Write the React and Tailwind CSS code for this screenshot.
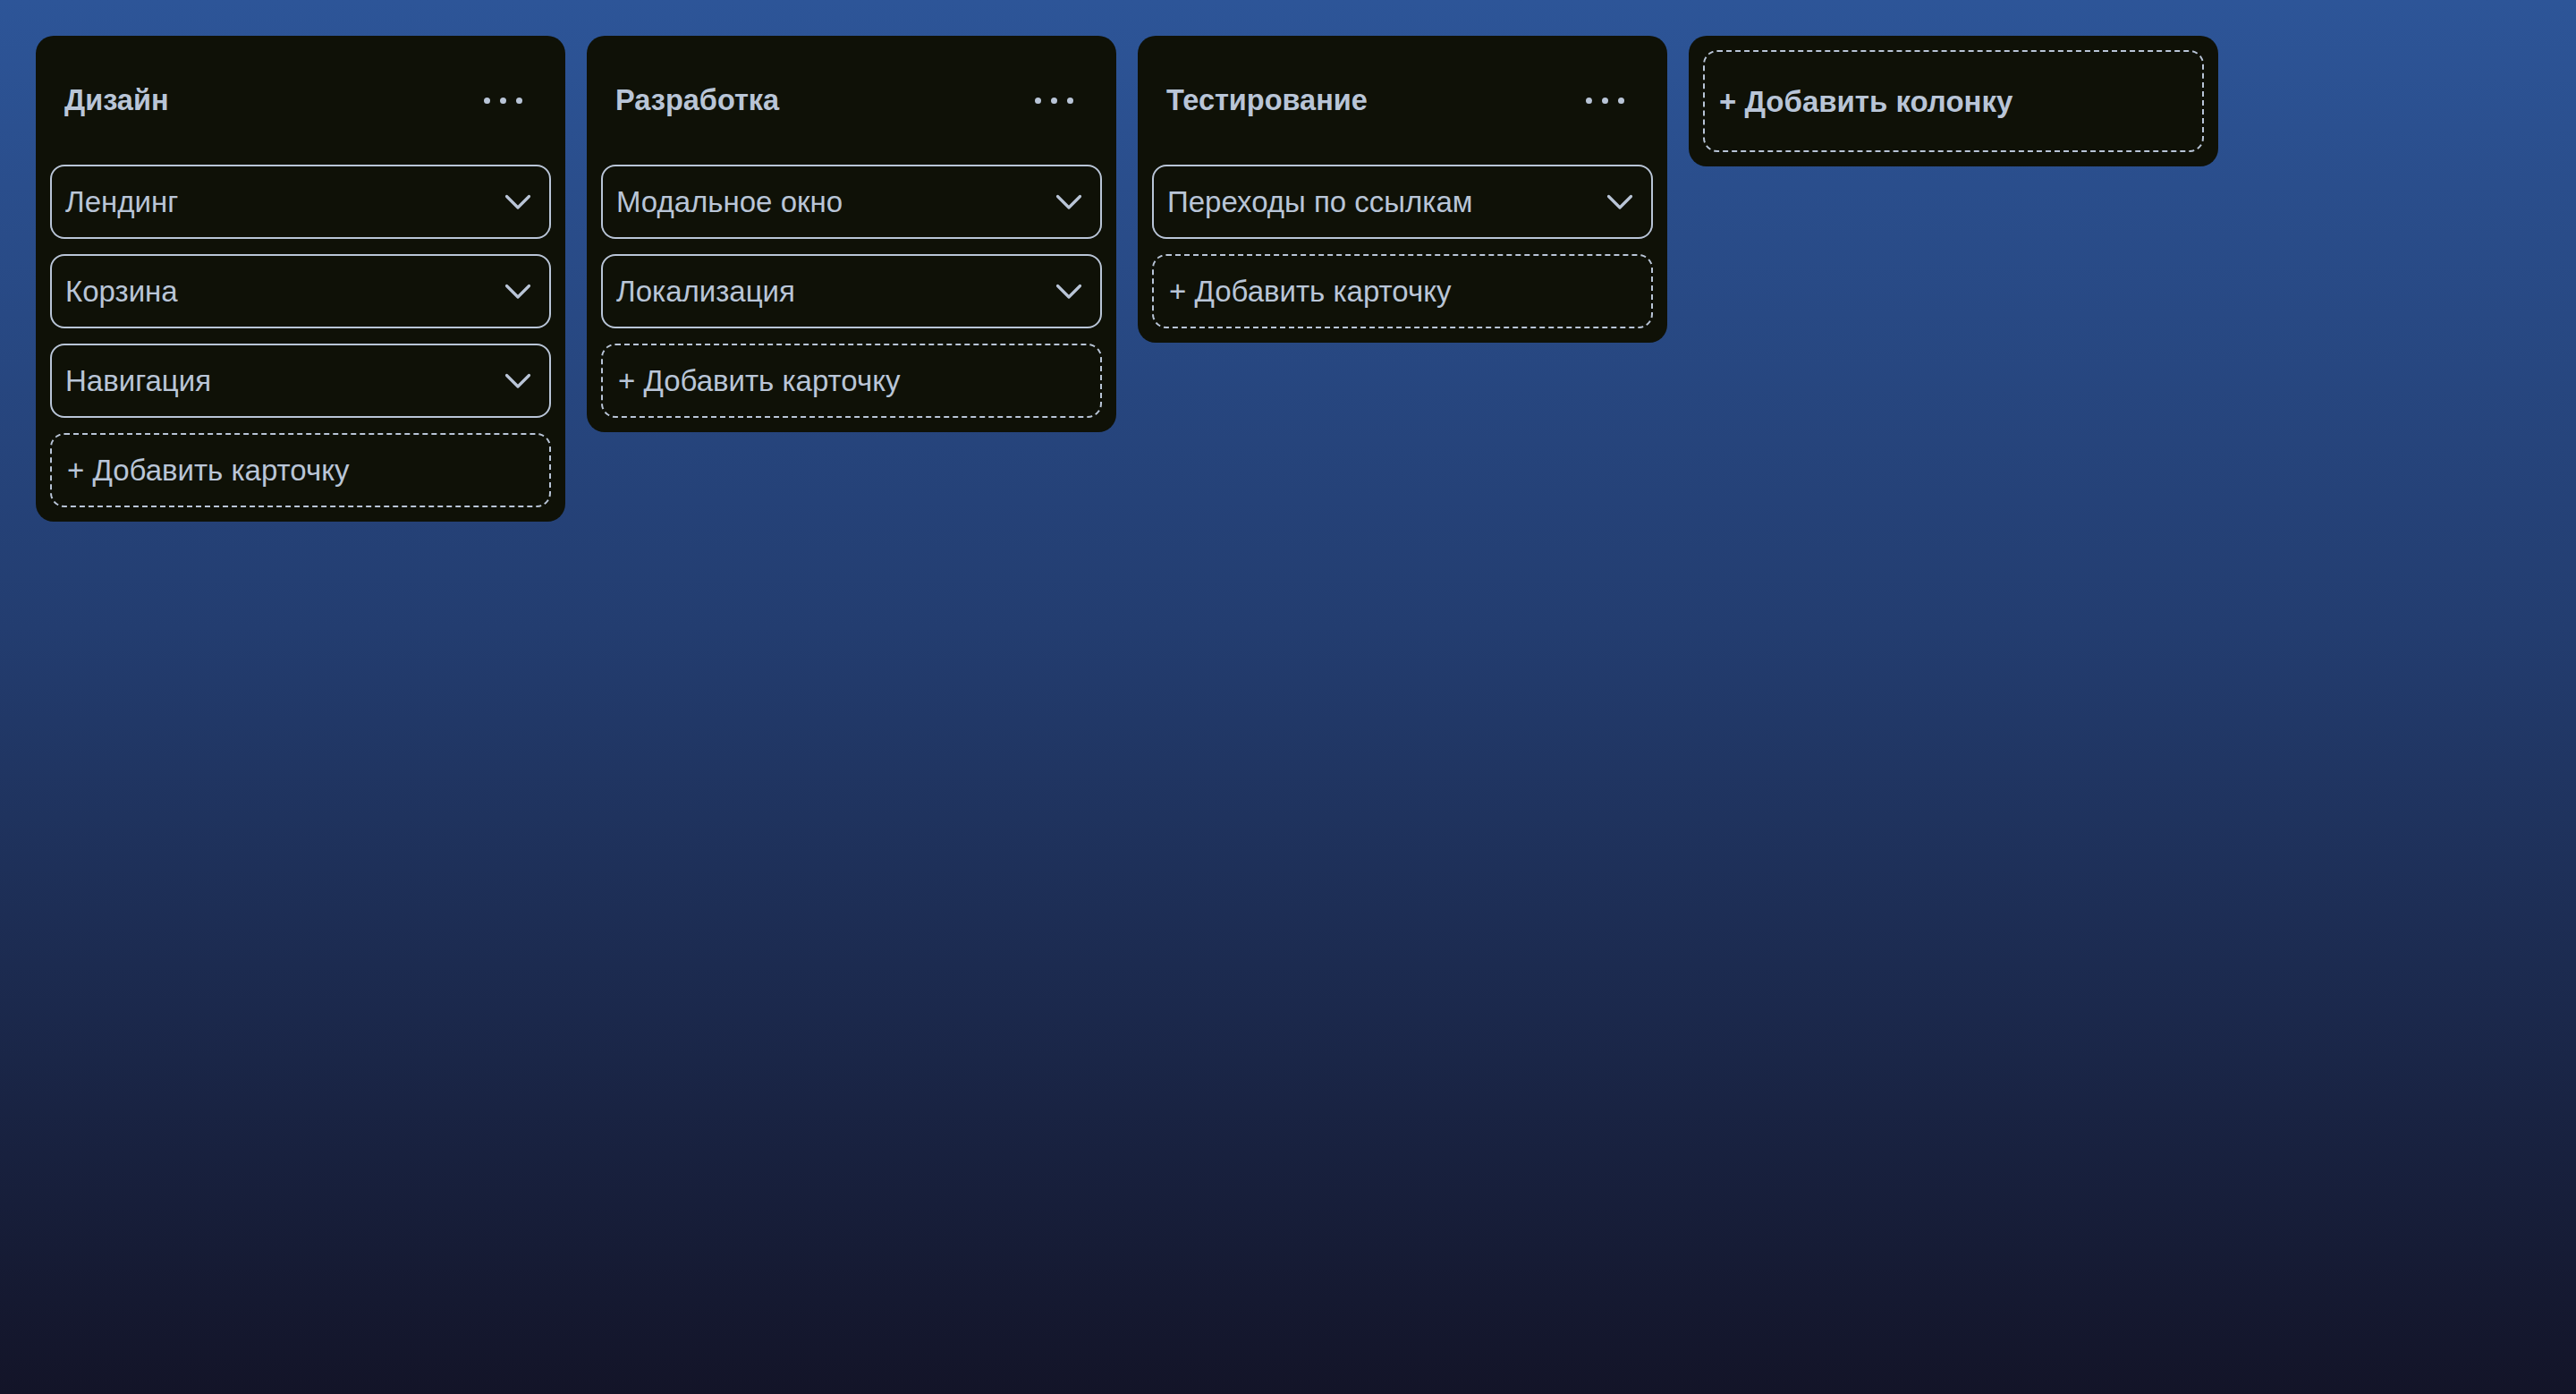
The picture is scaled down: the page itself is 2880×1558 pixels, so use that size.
import React from "react";

const columns = [
  { title: "Дизайн", cards: ["Лендинг", "Корзина", "Навигация"] },
  { title: "Разработка", cards: ["Модальное окно", "Локализация"] },
  { title: "Тестирование", cards: ["Переходы по ссылкам"] },
];

function Chevron() {
  return (
    <svg width="30" height="20" viewBox="0 0 30 20" fill="none" className="shrink-0">
      <polyline
        points="2.5,3.5 15,16 27.5,3.5"
        stroke="#b9c5d7"
        strokeWidth="3.2"
        strokeLinecap="round"
        strokeLinejoin="round"
      />
    </svg>
  );
}

function Dots() {
  return (
    <div className="flex items-center gap-[11px] mr-4">
      <span className="block w-[7px] h-[7px] rounded-full bg-[#b9c5d7]" />
      <span className="block w-[7px] h-[7px] rounded-full bg-[#b9c5d7]" />
      <span className="block w-[7px] h-[7px] rounded-full bg-[#b9c5d7]" />
    </div>
  );
}

function Column({ title, cards }) {
  return (
    <div className="w-[592px] shrink-0 rounded-[20px] bg-[#0f1107] p-4 flex flex-col">
      <div className="h-[112px] mb-4 px-4 flex items-center justify-between">
        <span className="text-[32.5px] font-bold leading-none">{title}</span>
        <Dots />
      </div>
      <div className="flex flex-col gap-[17px]">
        {cards.map((c) => (
          <div
            key={c}
            className="h-[83px] rounded-[16px] border-2 border-[#b9c5d7] pl-[15px] pr-[20px] flex items-center justify-between"
          >
            <span className="text-[33px] leading-none">{c}</span>
            <Chevron />
          </div>
        ))}
        <div className="h-[83px] rounded-[16px] border-2 border-dashed border-[#b9c5d7] pl-[17px] flex items-center">
          <span className="text-[33px] leading-none">+ Добавить карточку</span>
        </div>
      </div>
    </div>
  );
}

export default function App() {
  return (
    <div className="min-h-screen w-full bg-[linear-gradient(180deg,#2d5598_0%,#233d70_45%,#131428_100%)] p-10 font-['Liberation_Sans',Arial,sans-serif] text-[#b9c5d7]">
      <div className="flex items-start gap-6">
        {columns.map((col) => (
          <Column key={col.title} {...col} />
        ))}
        <div className="w-[592px] shrink-0 rounded-[20px] bg-[#0f1107] p-4">
          <div className="h-[114px] rounded-[16px] border-2 border-dashed border-[#b9c5d7] pl-[16px] flex items-center">
            <span className="text-[33px] font-bold leading-none">+ Добавить колонку</span>
          </div>
        </div>
      </div>
    </div>
  );
}
